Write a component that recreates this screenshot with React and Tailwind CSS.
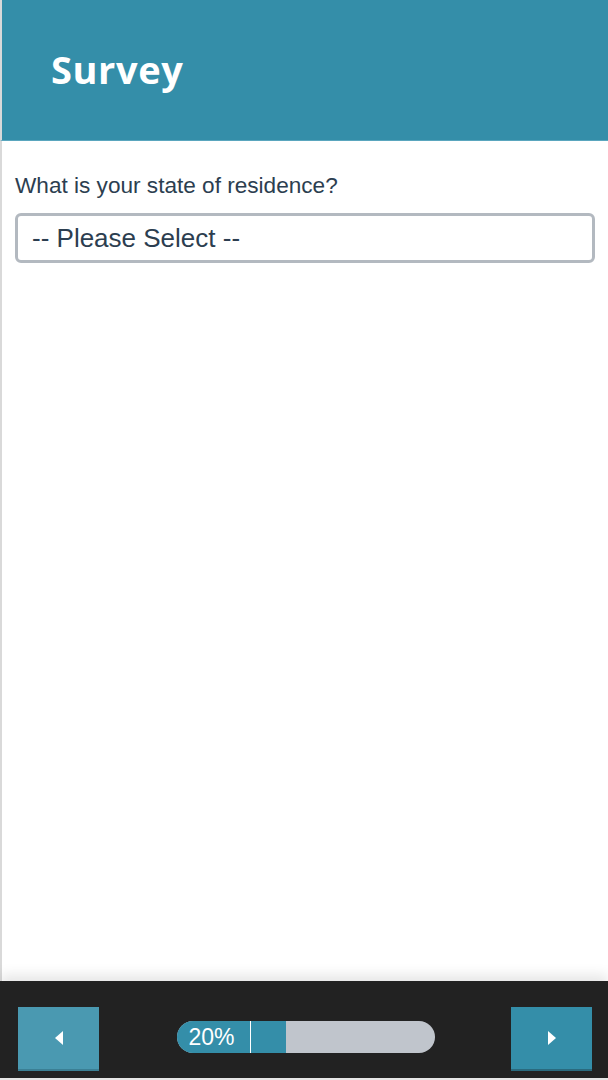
export default function App() {
  return (
    <div className="flex h-[1080px] flex-col bg-white" style={{ fontFamily: '"Liberation Sans", Arial, sans-serif' }}>
      {/* Header */}
      <div className="flex h-[141px] shrink-0 items-center border-l-2 border-b border-l-[#d9d9d9] border-b-[#5aa6be] bg-[#348ea9] pl-[49px] pb-[2px]">
        <h1 className="text-[38px] font-bold leading-none tracking-[0.6px] text-white" style={{ fontFamily: '"Open Sans", sans-serif' }}>
          Survey
        </h1>
      </div>

      {/* Question */}
      <div className="flex-1 border-l-2 border-l-[#d9d9d9] px-[13px] pt-[32px]">
        <label className="block text-[22.6px] leading-[26px] text-[#2c3e50]">What is your state of residence?</label>
        <div className="mt-[14px] flex h-[50px] w-[580px] items-center rounded-[6px] border-[3px] border-[#b3b9c0] bg-white pl-[14px]">
          <span className="text-[26px] leading-none text-[#2c3e50]">-- Please Select --</span>
        </div>
      </div>

      {/* Footer */}
      <div className="relative flex h-[99px] shrink-0 flex-col bg-[#222222] shadow-[0_-6px_12px_rgba(0,0,0,0.1)]">
        <div className="flex flex-1 items-start justify-between pl-[18px] pr-[16px] pt-[26px]">
          <button className="flex h-[64px] w-[81px] items-center justify-center border-b-2 border-[#3b7f94] bg-[#4a99b1]">
            <svg width="8" height="14" viewBox="0 0 8 14">
              <path d="M8 0 L0 7 L8 14 Z" fill="white" />
            </svg>
          </button>
          <div className="ml-[1px] mt-[14px] flex h-[32px] w-[258px] overflow-hidden rounded-full bg-[#c0c5cc]">
            <div className="flex h-full w-[109px] items-center bg-[#348ea9]">
              <span className="w-[73px] pl-[12px] text-[23px] leading-none text-white">20%</span>
              <span className="h-full w-px bg-white" />
            </div>
          </div>
          <button className="flex h-[64px] w-[81px] items-center justify-center border-b-2 border-[#2a6a7e] bg-[#348ea9]">
            <svg width="8" height="14" viewBox="0 0 8 14">
              <path d="M0 0 L8 7 L0 14 Z" fill="white" />
            </svg>
          </button>
        </div>
        <div className="h-[2px] bg-[#e6e6e6]" />
      </div>
    </div>
  );
}
